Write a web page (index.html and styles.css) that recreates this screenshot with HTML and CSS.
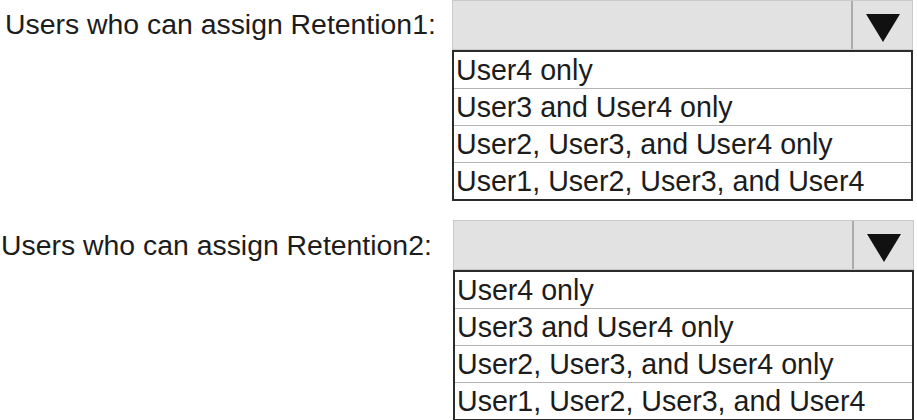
FILE: index.html
```html
<!DOCTYPE html>
<html lang="en">
<head>
    <meta charset="UTF-8">
    <meta name="viewport" content="width=device-width, initial-scale=1.0">
    <title>Retention labels</title>
    <link rel="stylesheet" href="styles.css">
</head>
<body>

    <!-- Retention1 -->
    <div class="question first">
        <span class="label">Users who can assign Retention1:</span>
        <div class="dropdown">
            <div class="dropdown-head">
                <div class="arrow-cell"><span class="arrow"></span></div>
            </div>
            <ul class="options">
                <li>User4 only</li>
                <li>User3 and User4 only</li>
                <li>User2, User3, and User4 only</li>
                <li>User1, User2, User3, and User4</li>
            </ul>
        </div>
    </div>

    <!-- Retention2 -->
    <div class="question second">
        <span class="label">Users who can assign Retention2:</span>
        <div class="dropdown">
            <div class="dropdown-head">
                <div class="arrow-cell"><span class="arrow"></span></div>
            </div>
            <ul class="options">
                <li>User4 only</li>
                <li>User3 and User4 only</li>
                <li>User2, User3, and User4 only</li>
                <li>User1, User2, User3, and User4</li>
            </ul>
        </div>
    </div>

</body>
</html>
```

FILE: styles.css
```css
body {
    font-family: "Liberation Sans", Arial, sans-serif;
    background-color: #fff;
    color: #1c1c1c;
    margin: 0;
    padding: 0;
}

/* Satu baris pertanyaan */
.question {
    display: flex;
    align-items: flex-start;
}

.question.second {
    margin-top: 19px;
}

.label {
    width: 452px;
    height: 50px;
    line-height: 48px;
    font-size: 28.4px;
    padding-left: 5px;
    box-sizing: border-box;
    white-space: nowrap;
}

.second .label {
    padding-left: 1px;
    line-height: 51px;
}

.dropdown {
    width: 461px;
}

.second .dropdown {
    margin-left: 1px;
}

/* Kotak abu-abu dengan panah */
.dropdown-head {
    height: 50px;
    box-sizing: border-box;
    background-color: #e2e2e2;
    border: 1px solid #cacaca;
    display: flex;
    justify-content: flex-end;
}

.arrow-cell {
    width: 59px;
    border-left: 2px solid #ababab;
    display: flex;
    justify-content: center;
    align-items: center;
    padding-top: 5px;
}

.arrow {
    width: 0;
    height: 0;
    border-left: 17px solid transparent;
    border-right: 17px solid transparent;
    border-top: 28px solid #111;
}

/* Daftar pilihan */
.options {
    list-style: none;
    margin: 0;
    padding: 0;
    border: 2px solid #2b2b2b;
    background-color: #fff;
}

.options li {
    height: 36px;
    line-height: 36px;
    font-size: 28.6px;
    padding-left: 2px;
    white-space: nowrap;
    border-bottom: 1px solid #b4b4b4;
}

.options li:last-child {
    border-bottom: none;
}
```
